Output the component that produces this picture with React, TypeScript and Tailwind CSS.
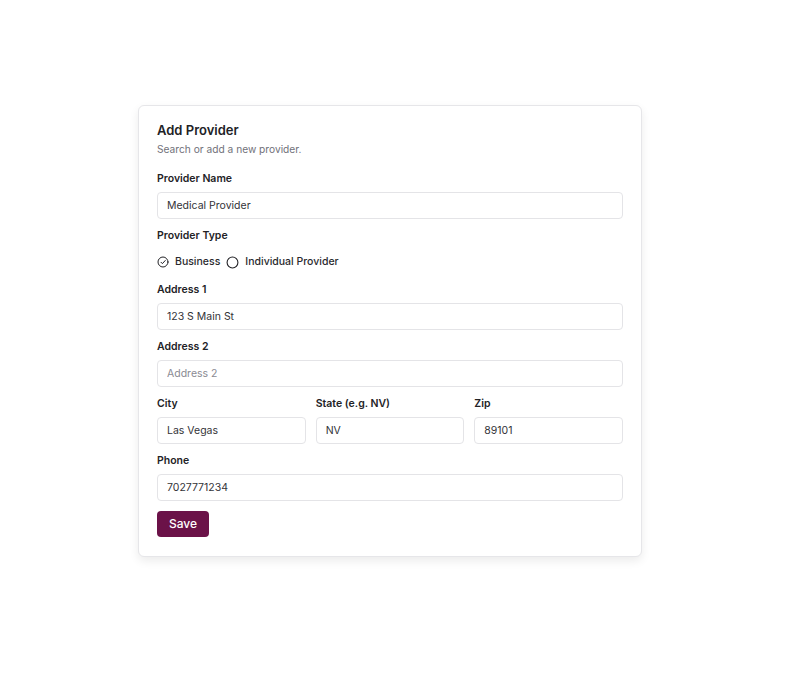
import { useState } from "react";

const Field = ({
  label,
  value,
  placeholder,
}: {
  label: string;
  value?: string;
  placeholder?: string;
}) => {
  return (
    <div className="flex flex-col">
      <label className="h-[14px] leading-[14px] text-[10.5px] font-semibold text-[#222226]">
        {label}
      </label>
      <input
        defaultValue={value}
        placeholder={placeholder}
        className="mt-[6px] h-[27px] w-full rounded-[4px] border border-[#e4e4e7] bg-white px-[9px] text-[10.5px] text-[#333338] placeholder:text-[#8a8a93] outline-none"
      />
    </div>
  );
};

const CheckCircle = () => (
  <svg width="12" height="12" viewBox="0 0 24 24" fill="none" stroke="#222226" strokeWidth="2" strokeLinecap="round" strokeLinejoin="round">
    <circle cx="12" cy="12" r="10" />
    <path d="m8 12.5 2.8 2.8L16.5 9" />
  </svg>
);

const EmptyCircle = () => (
  <svg width="13" height="13" viewBox="0 0 24 24" fill="none" stroke="#222226" strokeWidth="2">
    <circle cx="12" cy="12" r="10" />
  </svg>
);

export default function App() {
  const [type, setType] = useState<"business" | "individual">("business");

  return (
    <div
      className="min-h-[682px] bg-white pt-[105px] pl-[138px]"
      style={{ fontFamily: "Inter, 'Noto Sans', sans-serif" }}
    >
      <div className="w-[504px] rounded-[6px] border border-[#e6e6e9] bg-white px-[18px] pt-[15px] pb-[19px] shadow-[0_4px_10px_rgba(0,0,0,0.08)]">
        <h2 className="text-[13px] leading-[18px] font-semibold text-[#222226]">Add Provider</h2>
        <p className="mt-[3px] text-[10.2px] leading-[14px] text-[#71717a]">
          Search or add a new provider.
        </p>

        <div className="mt-[16px] flex flex-col gap-[10px]">
          <Field label="Provider Name" value="Medical Provider" />

          <div className="flex flex-col">
            <label className="h-[14px] leading-[14px] text-[10.5px] font-semibold text-[#222226]">
              Provider Type
            </label>
            <div className="mt-2 flex h-[22px] items-center gap-[6px] text-[10.5px] font-medium text-[#2a2a2e]">
              <button
                type="button"
                onClick={() => setType("business")}
                className="flex items-center gap-[6px]"
              >
                {type === "business" ? <CheckCircle /> : <EmptyCircle />}
                <span>Business</span>
              </button>
              <button
                type="button"
                onClick={() => setType("individual")}
                className="flex items-center gap-[6px]"
              >
                {type === "individual" ? <CheckCircle /> : <EmptyCircle />}
                <span>Individual Provider</span>
              </button>
            </div>
          </div>

          <Field label="Address 1" value="123 S Main St" />
          <Field label="Address 2" placeholder="Address 2" />

          <div className="grid grid-cols-3 gap-[10px]">
            <Field label="City" value="Las Vegas" />
            <Field label="State (e.g. NV)" value="NV" />
            <Field label="Zip" value="89101" />
          </div>

          <Field label="Phone" value="7027771234" />
        </div>

        <button
          type="button"
          className="mt-[10px] h-[26px] w-[52px] rounded-[4px] bg-[#6b1248] text-[12px] font-medium text-white"
        >
          Save
        </button>
      </div>
    </div>
  );
}
